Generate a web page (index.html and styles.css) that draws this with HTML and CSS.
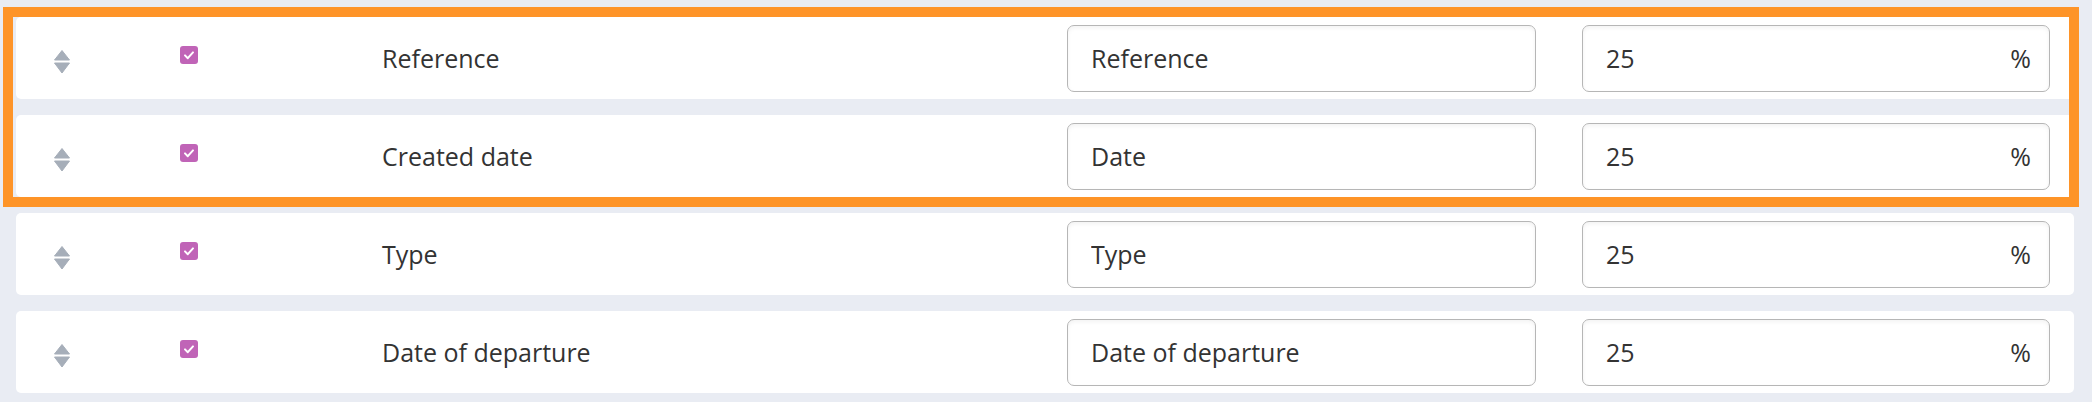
FILE: index.html
```html
<!DOCTYPE html>
<html lang="en">
  <head>
    <meta charset="UTF-8" />
    <meta name="viewport" content="width=device-width, initial-scale=1.0" />
    <title>Kolonner</title>
    <link rel="stylesheet" href="styles.css">
  </head>
  <body>
    <main id="liste">
      <div class="raekke">
        <span class="sorter"><svg viewBox="0 0 16 24" width="16" height="24"><path d="M8 0.5 L15.5 10 H0.5 Z M0.5 13 H15.5 L8 23 Z" /></svg></span>
        <span class="valg"><span class="boks"><svg viewBox="0 0 18 18" width="18" height="18"><path d="M5 9.4 L7.8 12.2 L13 6.4" /></svg></span></span>
        <span class="navn">Reference</span>
        <input class="felt" type="text" value="Reference" />
        <label class="felt procent"><input type="text" value="25" /><span>%</span></label>
      </div>
      <div class="raekke">
        <span class="sorter"><svg viewBox="0 0 16 24" width="16" height="24"><path d="M8 0.5 L15.5 10 H0.5 Z M0.5 13 H15.5 L8 23 Z" /></svg></span>
        <span class="valg"><span class="boks"><svg viewBox="0 0 18 18" width="18" height="18"><path d="M5 9.4 L7.8 12.2 L13 6.4" /></svg></span></span>
        <span class="navn">Created date</span>
        <input class="felt" type="text" value="Date" />
        <label class="felt procent"><input type="text" value="25" /><span>%</span></label>
      </div>
      <div class="raekke">
        <span class="sorter"><svg viewBox="0 0 16 24" width="16" height="24"><path d="M8 0.5 L15.5 10 H0.5 Z M0.5 13 H15.5 L8 23 Z" /></svg></span>
        <span class="valg"><span class="boks"><svg viewBox="0 0 18 18" width="18" height="18"><path d="M5 9.4 L7.8 12.2 L13 6.4" /></svg></span></span>
        <span class="navn">Type</span>
        <input class="felt" type="text" value="Type" />
        <label class="felt procent"><input type="text" value="25" /><span>%</span></label>
      </div>
      <div class="raekke">
        <span class="sorter"><svg viewBox="0 0 16 24" width="16" height="24"><path d="M8 0.5 L15.5 10 H0.5 Z M0.5 13 H15.5 L8 23 Z" /></svg></span>
        <span class="valg"><span class="boks"><svg viewBox="0 0 18 18" width="18" height="18"><path d="M5 9.4 L7.8 12.2 L13 6.4" /></svg></span></span>
        <span class="navn">Date of departure</span>
        <input class="felt" type="text" value="Date of departure" />
        <label class="felt procent"><input type="text" value="25" /><span>%</span></label>
      </div>
    </main>

    <div class="markering"></div>
  </body>
</html>
```

FILE: styles.css
```css
body {
  margin: 0;
  padding: 17px 18px 0 16px;
  position: relative;
  background-color: #e9ecf3;
  font-family: "Open Sans", sans-serif;
  font-size: 25px;
  color: #333;
}

#liste {
  display: flex;
  flex-direction: column;
  gap: 16px;
}

.raekke {
  display: flex;
  align-items: center;
  height: 82px;
  padding: 0 24px 0 38px;
  background-color: white;
  border-radius: 5px;
}

.sorter {
  width: 126px;
  display: flex;
  margin-top: 7px;
}

.sorter path {
  fill: #a6aeb9;
  stroke: #a6aeb9;
  stroke-width: 1;
  stroke-linejoin: round;
}

.valg {
  width: 202px;
  display: flex;
  margin-bottom: 7px;
}

.boks {
  width: 18px;
  height: 18px;
  border-radius: 3px;
  background-color: #c064b7;
  display: flex;
}

.boks path {
  fill: none;
  stroke: white;
  stroke-width: 2;
  stroke-linecap: round;
  stroke-linejoin: round;
}

.navn {
  flex: 1;
}

.felt {
  box-sizing: border-box;
  flex-shrink: 0;
  height: 67px;
  border: 1.5px solid #b6b6b6;
  border-radius: 7px;
  box-shadow: inset 0 2px 4px rgba(0, 0, 0, 0.05);
  background-color: white;
  font-family: "Open Sans", sans-serif;
  font-size: 25px;
  color: #333;
}

input.felt {
  width: 469px;
  margin-right: 46px;
  padding: 0 23px;
  outline: none;
}

.procent {
  width: 468px;
  display: flex;
  align-items: center;
  padding: 0 18px 0 23px;
}

.procent input {
  flex: 1;
  min-width: 0;
  border: none;
  outline: none;
  padding: 0;
  background: none;
  font: inherit;
  color: inherit;
}

.markering {
  position: absolute;
  left: 3px;
  top: 7px;
  width: 2076px;
  height: 200px;
  box-sizing: border-box;
  border: 10px solid #fe9428;
  pointer-events: none;
}
```
